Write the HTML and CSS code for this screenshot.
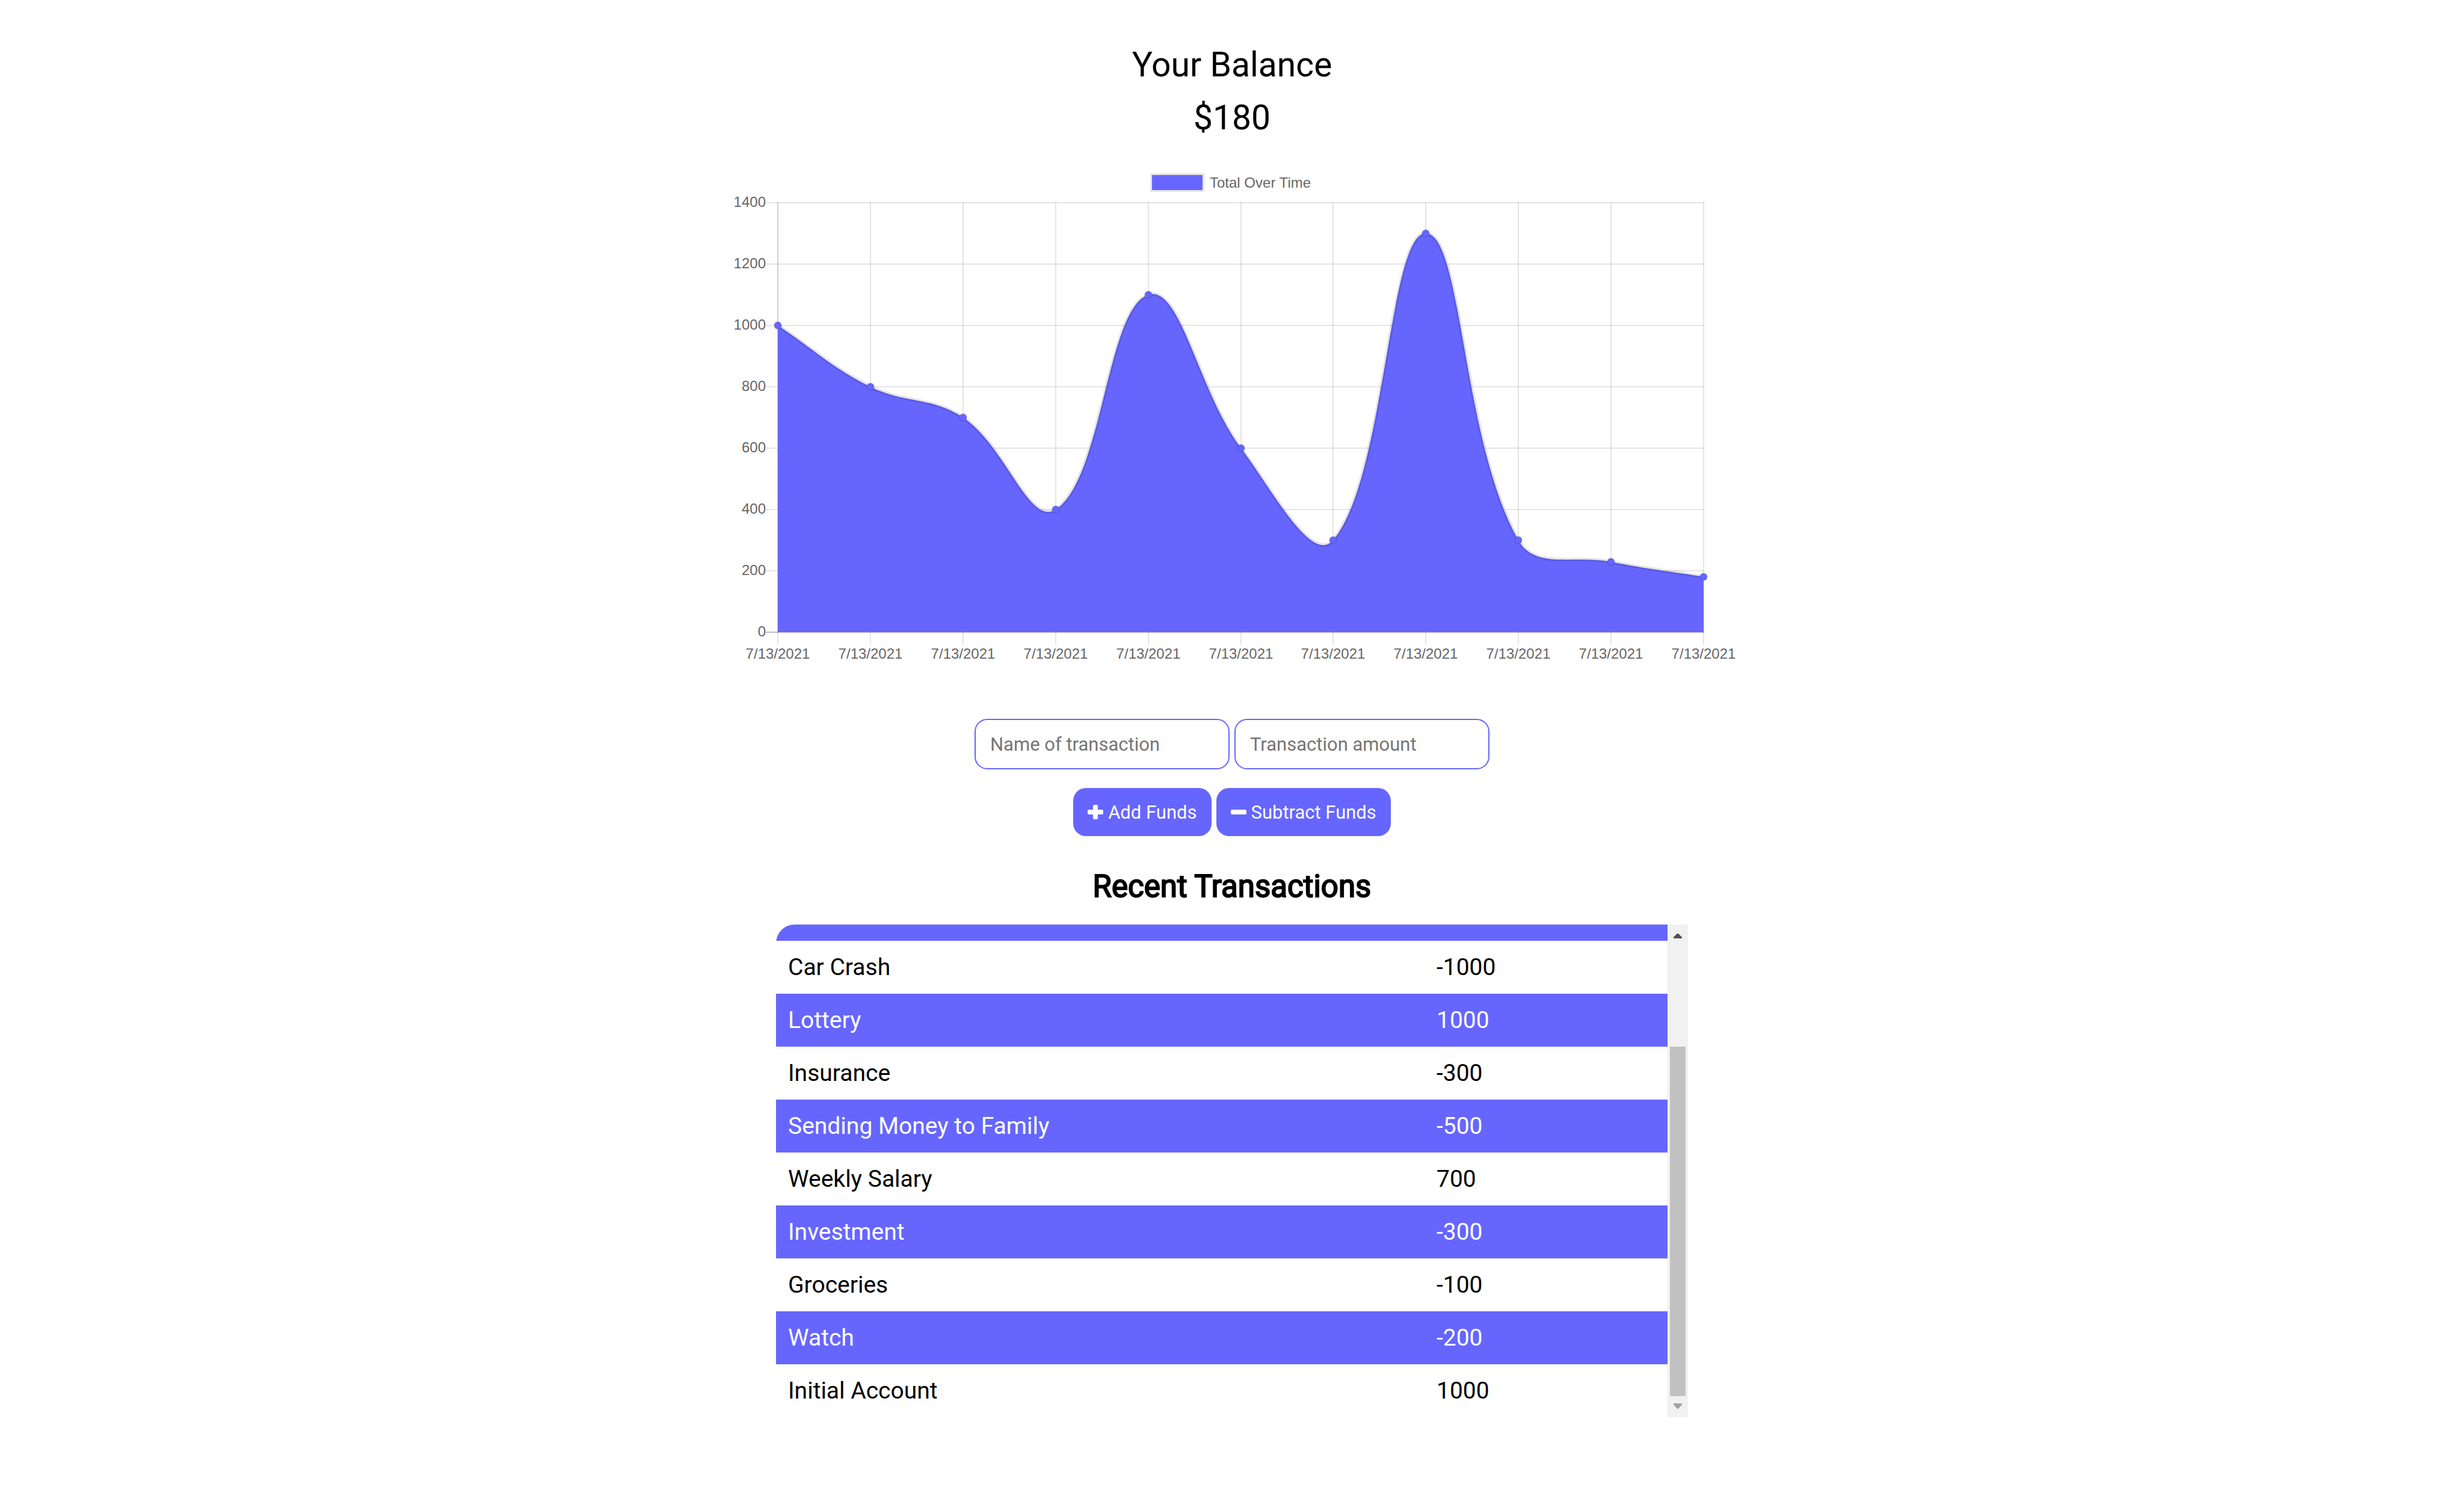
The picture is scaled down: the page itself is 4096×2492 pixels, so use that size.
FILE: index.html
```html
<!DOCTYPE html>
<html lang="en">
<head>
<meta charset="utf-8">
<meta name="viewport" content="width=device-width, initial-scale=1">
<title>Budget Tracker</title>
<link rel="stylesheet" href="styles.css">
</head>
<body>
<main class="page">
  <header class="balance">
    <h1 class="balance-line">Your Balance</h1>
    <p class="balance-line">$180</p>
  </header>

  <svg class="chart" viewBox="0 0 1672 836" role="img" aria-label="Total Over Time">
    <g class="legend">
      <rect class="legend-border" x="703" y="21" width="84" height="25"/>
      <rect class="legend-box" x="703" y="21" width="84" height="25"/>
      <text class="chart-text" x="799" y="42">Total Over Time</text>
    </g>
    <path class="grid" d="M61 67H1621M61 169H1621M61 271H1621M61 373H1621M61 475H1621M61 577H1621M61 679H1621"/>
    <path class="grid" d="M81 66V802"/>
    <path class="grid" d="M235 66V802"/>
    <path class="grid" d="M389 66V802"/>
    <path class="grid" d="M543 66V802"/>
    <path class="grid" d="M697 66V802"/>
    <path class="grid" d="M851 66V802"/>
    <path class="grid" d="M1004 66V802"/>
    <path class="grid" d="M1158 66V802"/>
    <path class="grid" d="M1312 66V802"/>
    <path class="grid" d="M1466 66V802"/>
    <path class="grid" d="M1620 66V802"/>
    <path class="grid" d="M81 66V782"/>
    <path class="grid-zero" d="M61 781H1621"/>
    <path class="area" d="M81 271C142.6 311.8 169.4 340.4 235 373C292.6 401.6 336.3 389.1 389 424C459.5 470.7 498.9 606.2 543 577C622.1 524.6 627.2 243.1 697 220C750.4 202.3 780 380.6 851 475C902.8 543.8 968.4 669.3 1004 628C1091.2 526.5 1096.4 118 1158 118C1219.6 118 1217 459.6 1312 628C1340.2 678 1404 651.7 1466 664C1527.2 676.1 1558.4 679 1620 689V781H81Z"/>
    <path class="area-line" d="M81 271C142.6 311.8 169.4 340.4 235 373C292.6 401.6 336.3 389.1 389 424C459.5 470.7 498.9 606.2 543 577C622.1 524.6 627.2 243.1 697 220C750.4 202.3 780 380.6 851 475C902.8 543.8 968.4 669.3 1004 628C1091.2 526.5 1096.4 118 1158 118C1219.6 118 1217 459.6 1312 628C1340.2 678 1404 651.7 1466 664C1527.2 676.1 1558.4 679 1620 689"/>
    <g class="points">
      <circle cx="81" cy="271" r="6"/>
      <circle cx="235" cy="373" r="6"/>
      <circle cx="389" cy="424" r="6"/>
      <circle cx="543" cy="577" r="6"/>
      <circle cx="697" cy="220" r="6"/>
      <circle cx="851" cy="475" r="6"/>
      <circle cx="1004" cy="628" r="6"/>
      <circle cx="1158" cy="118" r="6"/>
      <circle cx="1312" cy="628" r="6"/>
      <circle cx="1466" cy="664" r="6"/>
      <circle cx="1620" cy="689" r="6"/>
    </g>
    <g class="chart-text labels-y">
      <text x="61" y="74">1400</text>
      <text x="61" y="176">1200</text>
      <text x="61" y="278">1000</text>
      <text x="61" y="380">800</text>
      <text x="61" y="482">600</text>
      <text x="61" y="584">400</text>
      <text x="61" y="686">200</text>
      <text x="61" y="788">0</text>
    </g>
    <g class="chart-text labels-x">
      <text x="81" y="825">7/13/2021</text>
      <text x="235" y="825">7/13/2021</text>
      <text x="389" y="825">7/13/2021</text>
      <text x="543" y="825">7/13/2021</text>
      <text x="697" y="825">7/13/2021</text>
      <text x="851" y="825">7/13/2021</text>
      <text x="1004" y="825">7/13/2021</text>
      <text x="1158" y="825">7/13/2021</text>
      <text x="1312" y="825">7/13/2021</text>
      <text x="1466" y="825">7/13/2021</text>
      <text x="1620" y="825">7/13/2021</text>
    </g>
  </svg>

  <form class="form">
    <div class="form-row">
      <input class="field" type="text" placeholder="Name of transaction" aria-label="Name of transaction">
      <input class="field" type="text" inputmode="numeric" placeholder="Transaction amount" aria-label="Transaction amount">
    </div>
    <div class="form-row">
      <button class="btn" type="button">
        <svg class="btn-icon" viewBox="0 0 26 26" aria-hidden="true"><path d="M11 1h4a2 2 0 0 1 2 2v6h7a2 2 0 0 1 2 2v4a2 2 0 0 1-2 2h-7v6a2 2 0 0 1-2 2h-4a2 2 0 0 1-2-2v-6H2a2 2 0 0 1-2-2v-4a2 2 0 0 1 2-2h7V3a2 2 0 0 1 2-2z"/></svg>
        Add Funds
      </button>
      <button class="btn" type="button">
        <svg class="btn-icon" viewBox="0 0 26 26" aria-hidden="true"><path d="M2 9h22a2 2 0 0 1 2 2v4a2 2 0 0 1-2 2H2a2 2 0 0 1-2-2v-4a2 2 0 0 1 2-2z"/></svg>
        Subtract Funds
      </button>
    </div>
  </form>

  <h2 class="section-title">Recent Transactions</h2>

  <section class="list">
    <table class="transactions">
      <colgroup><col class="col-name"><col></colgroup>
      <tbody>
        <tr class="partial"><td></td><td></td></tr>
        <tr><td>Car Crash</td><td>-1000</td></tr>
        <tr><td>Lottery</td><td>1000</td></tr>
        <tr><td>Insurance</td><td>-300</td></tr>
        <tr><td>Sending Money to Family</td><td>-500</td></tr>
        <tr><td>Weekly Salary</td><td>700</td></tr>
        <tr><td>Investment</td><td>-300</td></tr>
        <tr><td>Groceries</td><td>-100</td></tr>
        <tr><td>Watch</td><td>-200</td></tr>
        <tr><td>Initial Account</td><td>1000</td></tr>
      </tbody>
    </table>
    <div class="scrollbar" aria-hidden="true">
      <svg class="arrow arrow-up" viewBox="0 0 34 35"><path d="M10 23v-2l6-6h2l6 6v2z"/></svg>
      <div class="thumb"></div>
      <svg class="arrow arrow-down" viewBox="0 0 34 35"><path d="M10 12v2l6 7h2l6-7v-2z"/></svg>
    </div>
  </section>
</main>
</body>
</html>
```
FILE: styles.css
```css
:root {
  --accent: #6666ff;
}

* {
  box-sizing: border-box;
}

body {
  margin: 0;
  background: #fff;
  color: #000;
  font-family: Roboto, sans-serif;
}

.page {
  display: flex;
  flex-direction: column;
  align-items: center;
  padding: 64px 16px;
}

.balance {
  text-align: center;
}

.balance-line {
  margin: 0;
  font-size: 57px;
  font-weight: 400;
  line-height: 88px;
}

/* Chart */
.chart {
  display: block;
  width: 1672px;
  max-width: 100%;
  margin-top: 30px;
  overflow: visible;
}

.chart-text {
  font-family: "Liberation Sans", Arial, sans-serif;
  font-size: 24px;
  fill: #666;
}

.labels-y {
  text-anchor: end;
}

.labels-x {
  text-anchor: middle;
}

.legend-border {
  fill: #fff;
  stroke: #e5e5e5;
  stroke-width: 6px;
}

.legend-box,
.area {
  fill: var(--accent);
}

.grid,
.grid-zero {
  fill: none;
  stroke: rgba(0, 0, 0, 0.1);
  stroke-width: 2px;
}

.grid-zero {
  stroke: rgba(0, 0, 0, 0.25);
}

.area-line {
  fill: none;
  stroke: rgba(0, 0, 0, 0.1);
  stroke-width: 6px;
}

.points {
  fill: var(--accent);
  stroke: rgba(0, 0, 0, 0.1);
  stroke-width: 2px;
}

/* Form */
.form {
  display: flex;
  flex-direction: column;
  gap: 31px;
  margin-top: 89px;
}

.form-row {
  display: flex;
  justify-content: center;
  gap: 8px;
}

.field {
  width: 424px;
  height: 84px;
  padding: 0 24px;
  border: 2px solid var(--accent);
  border-radius: 21px;
  background: #fff;
  color: #000;
  font-family: inherit;
  font-size: 31px;
}

.field::placeholder {
  color: #757575;
  opacity: 1;
}

.btn {
  display: flex;
  align-items: center;
  gap: 8px;
  height: 80px;
  padding: 0 24px;
  border: 0;
  border-radius: 21px;
  background: var(--accent);
  color: #fff;
  font-family: inherit;
  font-size: 31px;
}

.btn-icon {
  width: 26px;
  height: 26px;
  fill: #fff;
}

/* Transactions */
.section-title {
  margin: 53px 0 33px;
  font-size: 51px;
  font-weight: 400;
  line-height: 61px;
  -webkit-text-stroke: 2px #000;
}

.list {
  display: flex;
  width: 1516px;
  max-width: 100%;
  border-top-left-radius: 31px;
  overflow: hidden;
}

.transactions {
  flex: 1;
  border-collapse: collapse;
  table-layout: fixed;
  font-size: 39px;
}

.col-name {
  width: 1078px;
}

.transactions tr {
  height: 88px;
}

.transactions tr.partial {
  height: 27px;
}

.transactions tr:nth-child(odd) {
  background: var(--accent);
  color: #fff;
}

.transactions td {
  padding: 0 20px;
}

.scrollbar {
  display: flex;
  flex-direction: column;
  justify-content: flex-end;
  width: 34px;
  background: #f1f1f1;
}

.arrow {
  flex: none;
  height: 35px;
}

.arrow-up {
  margin-bottom: auto;
  fill: #505050;
}

.arrow-down {
  fill: #a3a3a3;
}

.thumb {
  height: 581px;
  margin: 0 4px;
  background: #c1c1c1;
}
```
